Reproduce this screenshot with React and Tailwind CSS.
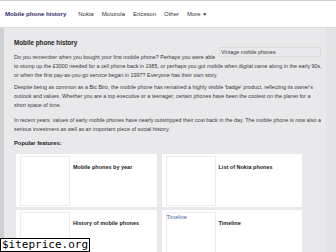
import React from "react";

const navItems = ["Nokia", "Motorola", "Ericsson", "Other"];

const features = [
  { title: "Mobile phones by year", alt: "" },
  { title: "List of Nokia phones", alt: "" },
  { title: "History of mobile phones", alt: "" },
  { title: "Timeline", alt: "Timeline" },
];

const FeatureCard = ({ title, alt }) => (
  <div className="bg-white h-[53px] flex items-start">
    <div className="w-[50px] h-[50px] mt-[2px] ml-[4px] border border-[#ececec] shrink-0">
      {alt && <span className="block text-[5.4px] leading-[7px] text-[#3b5bb0] pt-[1px]">{alt}</span>}
    </div>
    <div className="pl-[3px] pt-[9px] text-[5.5px] font-bold text-[#222]">{title}</div>
  </div>
);

const App = () => {
  return (
    <div
      className="w-[336px] h-[252px] overflow-hidden bg-[#e3e3e5] relative text-[#3a3a3a]"
      style={{ fontFamily: '"Liberation Sans", Arial, sans-serif' }}
    >
      <header className="h-[28px] bg-white border-t border-[#cfcfcf] border-b border-b-[#d8d8d8] flex items-center pl-[5px]">
        <span className="text-[6.1px] font-bold text-[#2e2a6e] mr-[12px]">Mobile phone history</span>
        <nav className="flex items-center gap-[8px] text-[6px] text-[#333]">
          {navItems.map((item) => (
            <span key={item}>{item}</span>
          ))}
          <span>
            More <span className="text-[5px]">▼</span>
          </span>
        </nav>
      </header>

      <div className="flex h-[224px]">
        <div className="w-[4px] bg-[#cfcfd1]" />
        <main className="w-[322px] bg-[#e9e9eb] pl-[10px] pt-[10px]">
          <h1 className="text-[6.3px] font-bold text-[#222] leading-[9px] mb-[6px]">Mobile phone history</h1>

          <p className="text-[5.4px] leading-[9px] mb-[3px]">
            <span className="float-right w-[102px] h-[10px] border border-[#dcdcdc] text-[5.4px] leading-[8px] pl-[1px] mt-[-6px] ml-[2px] mr-[5px]">
              Vintage mobile phones
            </span>
            Do you remember when you bought your first mobile phone? Perhaps you were able
            <br />
            to stump up the £3000 needed for a cell phone back in 1985, or perhaps you got mobile when digital came
            along in the early 90s,
            <br />
            or when the first pay-as-you-go service began in 1997? Everyone has their own story.
          </p>

          <p className="text-[5.4px] leading-[9px] mb-[6px]">
            Despite being as common as a Bic Biro, the mobile phone has remained a highly visible 'badge' product,
            reflecting its owner's
            <br />
            outlook and values. Whether you are a top executive or a teenager, certain phones have been the coolest on
            the planet for a
            <br />
            short space of time.
          </p>

          <p className="text-[5.4px] leading-[9px] mb-[5px]">
            In recent years, values of early mobile phones have nearly outstripped their cost back in the day. The
            mobile phone is now also a
            <br />
            serious investment as well as an important piece of social history.
          </p>

          <h2 className="text-[5.8px] font-bold text-[#222] leading-[9px] mb-[6px]">Popular features:</h2>

          <div className="grid grid-cols-2 w-[286px] ml-[2px] gap-x-[5px] gap-y-[3px]">
            {features.map((f) => (
              <FeatureCard key={f.title} {...f} />
            ))}
          </div>
        </main>
        <div className="flex-1 bg-[#e4e4e6]" />
      </div>

      <div
        className="absolute left-0 bottom-0 bg-white border border-black px-[1px] text-[11px] leading-[12px] text-black"
        style={{ fontFamily: '"DejaVu Sans Mono", monospace' }}
      >
        $iteprice.org
      </div>
    </div>
  );
};

export default App;
